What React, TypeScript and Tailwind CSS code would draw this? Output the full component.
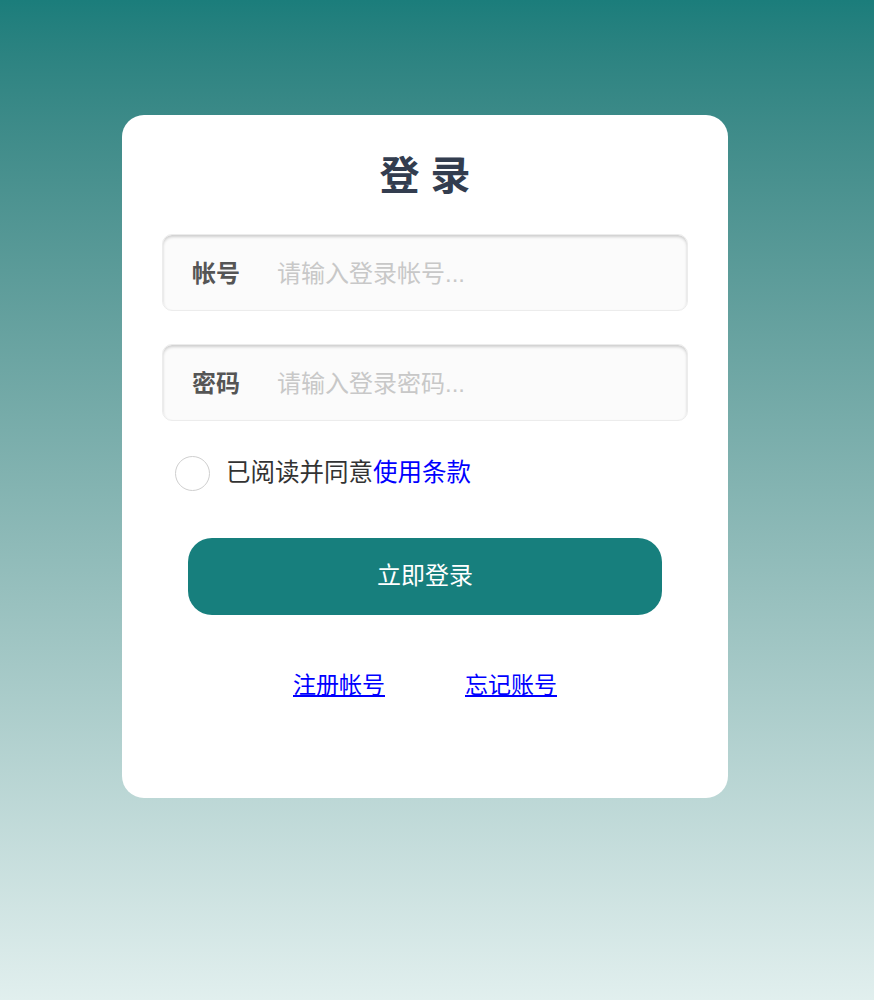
import { useState } from 'react'

const Field = ({ label, placeholder, type }: any) => (
  <div className="flex items-center h-[77px] rounded-[10px] bg-[#fbfbfb] border border-[#ececec] shadow-[inset_0_2px_3px_rgba(0,0,0,0.18)] px-[29px] pt-[2px]">
    <span className="text-[24px] font-bold text-[#555] w-[85px] shrink-0">{label}</span>
    <input
      type={type}
      placeholder={placeholder}
      className="flex-1 bg-transparent outline-none text-[24px] text-[#333] placeholder:text-[#c8c8c8]"
    />
  </div>
)

const App = () => {
  const [agree, setAgree] = useState(false)

  return (
    <div
      className="min-h-[1000px] w-full bg-gradient-to-b from-[#1b7d7b] to-[#e1efee] pt-[115px] pl-[122px]"
      style={{ fontFamily: '"Liberation Sans", "Noto Sans CJK SC", sans-serif' }}
    >
      <div className="w-[606px] h-[683px] bg-white rounded-[22px] px-[40px] pt-[34px]">
        {/* TITLE */}
        <h1 className="text-center text-[40px] leading-[54px] font-bold text-[#333d4f]">
          登 录
        </h1>

        {/* FIELDS */}
        <div className="mt-[31px] flex flex-col gap-[33px]">
          <Field label="帐号" placeholder="请输入登录帐号..." type="text" />
          <Field label="密码" placeholder="请输入登录密码..." type="password" />
        </div>

        {/* AGREE */}
        <div className="mt-[34px] flex items-center pl-[13px] gap-[16px]">
          <button
            onClick={() => setAgree(!agree)}
            className={`w-[35px] h-[35px] rounded-full border border-[#cfcfcf] ${agree ? 'bg-[#177f7d]' : 'bg-white'}`}
          />
          <span className="text-[24.5px] text-[#333]">
            已阅读并同意<a className="text-[#0000ff] cursor-pointer">使用条款</a>
          </span>
        </div>

        {/* LOGIN */}
        <div className="mt-[46px] flex justify-center">
          <button className="w-[474px] h-[77px] rounded-[24px] bg-[#177f7d] text-white text-[24px]">
            立即登录
          </button>
        </div>

        {/* LINKS */}
        <div className="mt-[53px] flex justify-center gap-[80px] text-[23px]">
          <a className="text-[#0000ff] underline cursor-pointer">注册帐号</a>
          <a className="text-[#0000ff] underline cursor-pointer">忘记账号</a>
        </div>
      </div>
    </div>
  )
}

export default App
